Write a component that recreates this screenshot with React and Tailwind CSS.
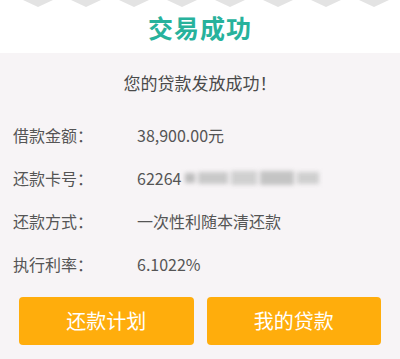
export default function App() {
  const rows = [
    { label: '借款金额：', value: '38,900.00元' },
    { label: '还款卡号：', value: 'card' },
    { label: '还款方式：', value: '一次性利随本清还款' },
    { label: '执行利率：', value: '6.1022%' },
  ];

  return (
    <div
      className="w-[400px] h-[359px] overflow-hidden bg-[#f7f4f6] flex flex-col"
      style={{ fontFamily: '"Noto Sans CJK SC", "Noto Sans", sans-serif' }}
    >
      {/* header */}
      <div className="bg-white h-[53px] flex flex-col relative">
        <div className="flex pl-[23px] gap-[18px]">
          {[0, 1, 2, 3, 4, 5, 6, 7].map(i => (
            <div
              key={i}
              className="w-0 h-0 border-l-[15px] border-r-[15px] border-t-[7px] border-l-transparent border-r-transparent border-t-[#e3e3e3]"
            />
          ))}
        </div>
        <div className="flex justify-center mt-[4px]">
          <span className="text-[25px] leading-[32px] font-bold text-[#27b29c] tracking-[1px]">交易成功</span>
        </div>
      </div>

      <div className="h-[60px] flex items-center justify-center text-[17px] text-[#4a4a4a]">
        您的贷款发放成功！
      </div>

      <div className="flex flex-col pl-[13px]">
        {rows.map((r, i) => (
          <div key={i} className="h-[43px] flex items-center text-[16px] text-[#555]">
            <span className="w-[124px]">{r.label}</span>
            {r.value === 'card' ? (
              <span className="flex items-center">
                <span>62264</span>
                <span className="ml-[4px] flex items-center gap-[3px] blur-[2px]">
                  <span className="w-[10px] h-[10px] bg-[#bdbdbd]" />
                  <span className="w-[30px] h-[12px] bg-[#c9c9c9]" />
                  <span className="w-[26px] h-[14px] bg-[#d0d0d0]" />
                  <span className="w-[34px] h-[14px] bg-[#c4c4c4]" />
                  <span className="w-[22px] h-[12px] bg-[#cfcfcf]" />
                </span>
              </span>
            ) : (
              <span>{r.value}</span>
            )}
          </div>
        ))}
      </div>

      <div className="flex gap-[13px] px-[19px] mt-[12px]">
        <button className="flex-1 h-[48px] rounded-[4px] bg-[#ffad0c] text-white text-[20px] flex items-center justify-center">
          还款计划
        </button>
        <button className="flex-1 h-[48px] rounded-[4px] bg-[#ffad0c] text-white text-[20px] flex items-center justify-center">
          我的贷款
        </button>
      </div>
    </div>
  );
}
